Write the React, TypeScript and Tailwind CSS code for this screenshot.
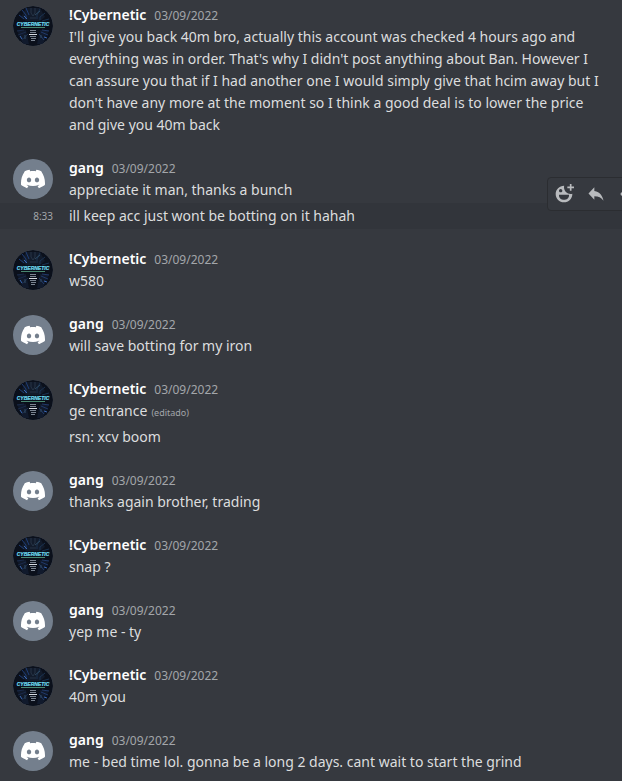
import clsx from 'clsx';
import { SiDiscord } from 'react-icons/si';

type Author = '!Cybernetic' | 'gang';

interface Message {
  text: string;
  edited?: boolean;
  time?: string;
  active?: boolean;
}

interface Group {
  author: Author;
  messages: Message[];
}

const groups: Group[] = [
  {
    author: '!Cybernetic',
    messages: [
      {
        text: "I'll give you back 40m bro, actually this account was checked 4 hours ago and everything was in order. That's why I didn't post anything about Ban. However I can assure you that if I had another one I would simply give that hcim away but I don't have any more at the moment so I think a good deal is to lower the price and give you 40m back",
      },
    ],
  },
  {
    author: 'gang',
    messages: [
      { text: 'appreciate it man, thanks a bunch' },
      { text: 'ill keep acc just wont be botting on it hahah', time: '8:33', active: true },
    ],
  },
  { author: '!Cybernetic', messages: [{ text: 'w580' }] },
  { author: 'gang', messages: [{ text: 'will save botting for my iron' }] },
  {
    author: '!Cybernetic',
    messages: [{ text: 'ge entrance', edited: true }, { text: 'rsn: xcv boom' }],
  },
  { author: 'gang', messages: [{ text: 'thanks again brother, trading' }] },
  { author: '!Cybernetic', messages: [{ text: 'snap ?' }] },
  { author: 'gang', messages: [{ text: 'yep me - ty' }] },
  { author: '!Cybernetic', messages: [{ text: '40m you' }] },
  {
    author: 'gang',
    messages: [{ text: 'me - bed time lol. gonna be a long 2 days. cant wait to start the grind' }],
  },
];

function CyberneticLogo() {
  return (
    <svg viewBox="0 0 40 40" className="size-10" aria-hidden="true">
      <rect width="40" height="40" fill="#0b101b" />
      <path d="M13 2h14l5 9-5 4H13l-5-4Z" fill="#121b2b" />
      <path d="M4 24h9l3 14h-6ZM36 24h-9l-3 14h6Z" fill="#111a2c" />
      {/* circuit streaks */}
      <g fill="none" strokeWidth="1">
        <path d="M9 4l4 5v4M13 2l3 7M6 9l5 4" stroke="#203e75" />
        <path d="M27 3l-3 6v4M32 7l-5 4v3M36 13l-7 2" stroke="#1b3350" />
        <path d="M18 2v5l2 3 2-3V2M17 12h6" stroke="#263547" />
        <path d="M4 25l7-1M5 29l8-3M9 34l6-6" stroke="#1a2a4a" />
        <path d="M36 25l-7-1M35 29l-7-3M31 34l-5-6" stroke="#213a69" />
        <path d="M11 10l3 3M31 31l3 1M7 30l2 3" stroke="#3a68b4" />
        <path d="M22 9l5-4M12 29v4M28 29v3" stroke="#2f4a62" />
      </g>
      <text
        x="20"
        y="20"
        textAnchor="middle"
        fill="#6fdcf2"
        stroke="#6fdcf2"
        strokeWidth="0.2"
        className="font-['Liberation_Sans'] text-[5px] font-bold italic"
      >
        CYBERNETIC
      </text>
      <path d="M8 21.5h24" stroke="#48866f" strokeWidth="1" />
      <path d="M17 24.5h6M17 26.5h6M17 30.5h6M18 32.5h5M18 34.5h4" stroke="#7b8491" strokeWidth="1" />
      <path d="M16 28.5h8" stroke="#d5dae0" strokeWidth="1" />
    </svg>
  );
}

function Avatar({ author }: { author: Author }) {
  return (
    <div className="mt-0.5 flex size-10 shrink-0 items-center justify-center overflow-hidden rounded-full bg-[#747f8d]">
      {author === 'gang' ? <SiDiscord className="size-6 text-white" /> : <CyberneticLogo />}
    </div>
  );
}

const actions = [
  {
    label: 'Add reaction',
    path: 'M12.25 2C12.17 2 12.08 2 12 2C6.48 2 2 6.48 2 12C2 17.52 6.48 22 12 22C17.52 22 22 17.52 22 12C22 11.92 22 11.83 22 11.75C21.36 11.91 20.69 12 20 12C15.58 12 12 8.42 12 4C12 3.31 12.09 2.64 12.25 2ZM10 8C10 6.9 9.1 6 8 6C6.9 6 6 6.9 6 8C6 9.1 6.9 10 8 10C9.1 10 10 9.1 10 8ZM12 19C15.14 19 18 16.62 18 14V13H6V14C6 16.62 8.86 19 12 19ZM21 3V0H19V3H16V5H19V8H21V5H24V3H21Z',
  },
  {
    label: 'Reply',
    path: 'M10 8.27V4L3 11.47L10 18.93V14.56C15 14.56 18.5 16.27 21 20C20 14.67 17 9.33 10 8.27Z',
  },
  {
    label: 'More',
    path: 'M7 12a2 2 0 1 1-4 0a2 2 0 0 1 4 0ZM14 12a2 2 0 1 1-4 0a2 2 0 0 1 4 0ZM21 12a2 2 0 1 1-4 0a2 2 0 0 1 4 0Z',
  },
];

function Toolbar() {
  return (
    <div className="absolute -top-[26px] -right-[25px] flex rounded border border-[#2b2d31] bg-[#36393f] pr-0.5 text-[#b9bbbe]">
      {actions.map((action) => (
        <button
          key={action.label}
          type="button"
          aria-label={action.label}
          className="flex size-8 items-center justify-center"
        >
          <svg viewBox="0 0 24 24" fill="currentColor" fillRule="evenodd" className="size-5">
            <path d={action.path} />
          </svg>
        </button>
      ))}
    </div>
  );
}

function MessageText({ message }: { message: Message }) {
  return (
    <p>
      {message.text}
      {message.edited && <span className="ml-1 text-[9px] leading-none text-[#a3a6aa]">(editado)</span>}
    </p>
  );
}

function MessageGroup({ author, messages }: Group) {
  const [first, ...rest] = messages;

  return (
    <li>
      <article className="flex gap-4 py-0.5 pr-5 pl-[13px]">
        <Avatar author={author} />
        <div className="min-w-0 flex-1">
          <h3 className="flex h-[22px] items-baseline gap-2">
            <span className="font-semibold text-white">{author}</span>
            <time className="text-xs text-[#a3a6aa]">03/09/2022</time>
          </h3>
          <MessageText message={first} />
        </div>
      </article>
      {rest.map((message) => (
        <article
          key={message.text}
          className={clsx('relative flex gap-4 py-0.5 pr-5 pl-[13px]', message.active && 'bg-[#32353b]')}
        >
          <time className="w-10 shrink-0 text-right text-[10px] leading-[22px] text-[#a3a6aa]">
            {message.time}
          </time>
          <MessageText message={message} />
          {message.active && <Toolbar />}
        </article>
      ))}
    </li>
  );
}

export default function App() {
  return (
    <main className="min-h-screen overflow-hidden bg-[#36393f] pt-0.5 font-['Noto_Sans',sans-serif] text-[14px] leading-[22px] text-[#dcddde]">
      <ol className="flex flex-col gap-[17px]">
        {groups.map((group, index) => (
          <MessageGroup key={index} {...group} />
        ))}
      </ol>
    </main>
  );
}
